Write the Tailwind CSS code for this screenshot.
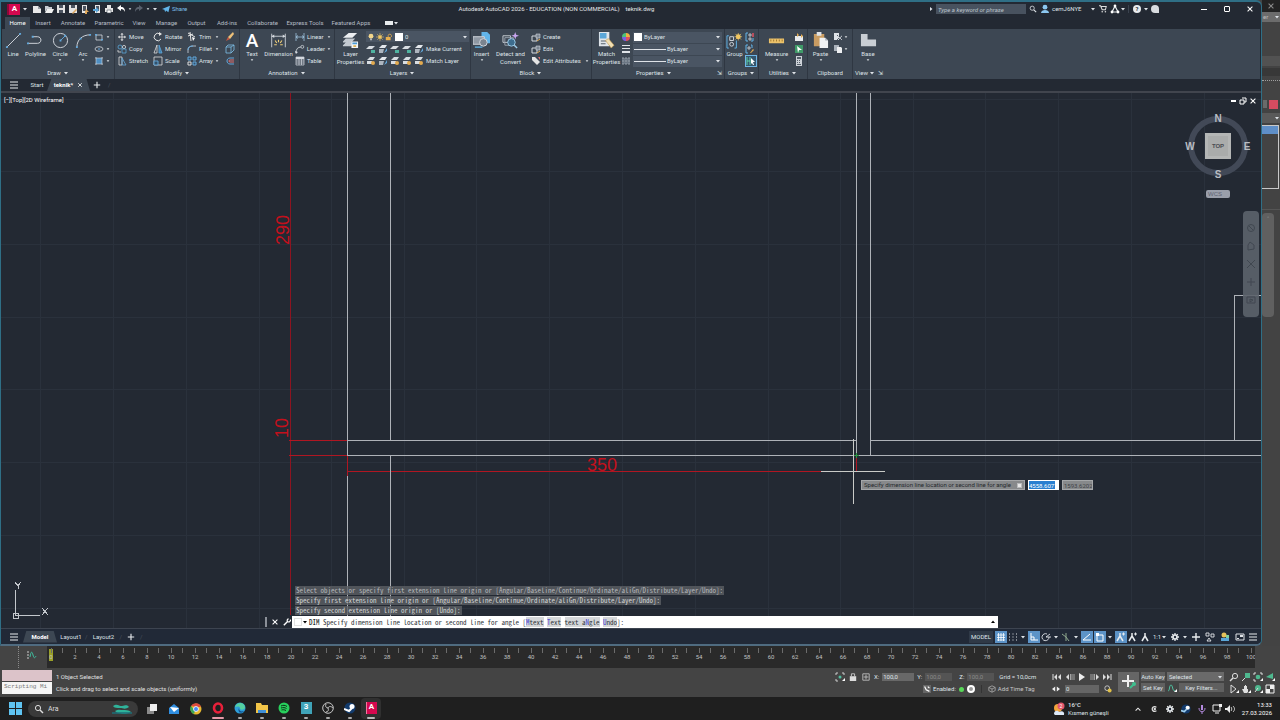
<!DOCTYPE html>
<html lang="en">

<head>
  <meta charset="UTF-8" />
  <meta name="viewport" content="width=device-width, initial-scale=1.0" />
  <title>Autodesk AutoCAD 2026 - teknik.dwg</title>
  <script src="https://cdn.jsdelivr.net/npm/@tailwindcss/browser@4"></script>
</head>

<body class="flex flex-col h-screen overflow-hidden bg-[#444444] font-[Roboto,sans-serif] text-[6px] leading-[8px] text-[#dfe3e8]">

  <!-- Icon sprite -->
  <svg class="hidden">
    <symbol id="caret" viewBox="0 0 6 6"><path d="M1 2h4L3 4.500z" fill="#dfe3e8" /></symbol>
    <symbol id="new" viewBox="0 0 10 10"><path d="M1 2h5l3 3v4H1z" fill="#e8e8e8" /><path d="M6 2v3h3" fill="#9aa0a8" /></symbol>
    <symbol id="open" viewBox="0 0 10 10"><path d="M1 2h3l1 1h3v2H3L1 8z" fill="#c8ccd2" /><path d="M3 5h7L8 9H1z" fill="#f0f0f0" /></symbol>
    <symbol id="save" viewBox="0 0 10 10"><path d="M1 1h8v8H1z" fill="#e4e4e4" /><path d="M3 1h4v3H3zM3 6h4v3H3z" fill="#4c5460" /></symbol>
    <symbol id="saveas" viewBox="0 0 10 10"><path d="M1 1h8v8H1z" fill="#e4e4e4" /><path d="M3 1h4v3H3z" fill="#4c5460" /><path d="M4 9l4-4 1 1-4 4z" fill="#d9a45c" /></symbol>
    <symbol id="cloud" viewBox="0 0 10 10"><path d="M2 1h5v8H2z" fill="#e4e4e4" /><path d="M3 2h3v5H3z" fill="#4c5460" /><path d="M6 5l3 3H7v2H5V8z" fill="#e0a85a" /></symbol>
    <symbol id="cloud2" viewBox="0 0 10 10"><path d="M3 1h5v8H3z" fill="#e4e4e4" /><path d="M4 2h3v5H4z" fill="#4c5460" /><path d="M1 5h3V3l3 3-3 3V7H1z" fill="#5aa6d8" /></symbol>
    <symbol id="print" viewBox="0 0 10 10"><path d="M3 1h4v3H3zM1 4h8v4H1z" fill="#e4e4e4" /><path d="M3 6h4v3H3z" fill="#fff" stroke="#4c5460" stroke-width=".6" /></symbol>
    <symbol id="undo" viewBox="0 0 10 10"><path d="M1 4l4-3v2c3 0 4 2 4 5-1-2-2-3-4-3v2z" fill="currentColor" /></symbol>
    <symbol id="plane" viewBox="0 0 10 10"><path d="M0 5l10-4-2 8-3-2-1 2-1-3z" fill="#62b5ea" /></symbol>
    <symbol id="mag" viewBox="0 0 10 10"><circle cx="4" cy="4" r="2.600" fill="none" stroke="currentColor" /><path d="M6 6l3 3" stroke="currentColor" stroke-width="1.400" /></symbol>
    <symbol id="user" viewBox="0 0 10 10"><circle cx="5" cy="3.200" r="2.400" fill="#8cc7f0" /><path d="M1 9c0-4 8-4 8 0z" fill="#8cc7f0" /></symbol>
    <symbol id="line" viewBox="0 0 18 18"><path d="M2 16L16 2" stroke="#d4d9df" /><path d="M1 15h2v2H1zM15 1h2v2h-2z" fill="#62a8dc" /></symbol>
    <symbol id="pline" viewBox="0 0 18 18"><path d="M1 12h10c5 0 5-7 0-7H6" stroke="#d4d9df" fill="none" /><path d="M0 11h2v2H0zM5 4h2v2H5z" fill="#62a8dc" /></symbol>
    <symbol id="circle" viewBox="0 0 18 18"><circle cx="9" cy="9" r="7.500" stroke="#d4d9df" fill="none" /><path d="M9 9l5-5" stroke="#62a8dc" /><path d="M8 8h2v2H8zM13 3h2v2h-2z" fill="#62a8dc" /></symbol>
    <symbol id="arc" viewBox="0 0 18 18"><path d="M2 16C2 8 8 3 16 3" stroke="#d4d9df" fill="none" /><path d="M1 15h2v2H1zM15 2h2v2h-2zM5 6h2v2H5z" fill="#62a8dc" /></symbol>
    <symbol id="rect" viewBox="0 0 10 10"><path d="M2 3h6v5H2z" stroke="#d4d9df" fill="none" stroke-width=".8" /><path d="M1 2h2v1.500H1zM7 7h2v1.500H7z" fill="#62a8dc" /></symbol>
    <symbol id="ell" viewBox="0 0 10 10"><ellipse cx="5" cy="5" rx="4" ry="2.300" stroke="#d4d9df" fill="none" stroke-width=".8" /><path d="M4.300 4.300h1.400v1.400H4.300z" fill="#62a8dc" /></symbol>
    <symbol id="hatch" viewBox="0 0 10 10"><path d="M2 2h6v6H2z" fill="#4f8fc2" /><path d="M1 2h8M1 8h8M2 1v8M8 1v8" stroke="#d4d9df" stroke-width=".6" /></symbol>
    <symbol id="move" viewBox="0 0 10 10"><path d="M5 1v8M1 5h8" stroke="#eee" /><path d="M5 0l2 2H3zM5 10l2-2H3zM0 5l2-2v4zM10 5L8 3v4z" fill="#eee" /></symbol>
    <symbol id="rot" viewBox="0 0 10 10"><path d="M8 7a3.700 3.700 0 1 1-1-5" stroke="#e4e4e4" fill="none" /><path d="M6 0l3 2-3 2z" fill="#e4e4e4" /></symbol>
    <symbol id="copy" viewBox="0 0 10 10"><circle cx="3" cy="3" r="2" stroke="#5aa6d8" fill="none" stroke-width=".8" /><circle cx="7" cy="3" r="1.600" stroke="#ddd" fill="none" stroke-width=".8" /><path d="M5 5h4v4H5z" stroke="#5aa6d8" fill="none" stroke-width=".8" /><path d="M1 6v2h3" stroke="#ddd" fill="none" stroke-width=".8" /></symbol>
    <symbol id="mirror" viewBox="0 0 10 10"><path d="M4 1v8H1z" stroke="#ddd" fill="none" stroke-width=".8" /><path d="M6 1v8h3z" fill="#3d7fae" stroke="#62a8dc" stroke-width=".8" /></symbol>
    <symbol id="stretch" viewBox="0 0 10 10"><path d="M2 1v8h3V1z" stroke="#ddd" fill="none" stroke-width=".8" /><path d="M5 2l4 7H5z" stroke="#62a8dc" fill="none" stroke-width=".8" /></symbol>
    <symbol id="scale" viewBox="0 0 10 10"><path d="M1 1h8v8H1z" stroke="#ddd" fill="none" stroke-width=".8" /><path d="M1 5h4v4H1z" stroke="#62a8dc" fill="#34516a" stroke-width=".9" /></symbol>
    <symbol id="trim" viewBox="0 0 10 10"><path d="M1 1l7 4M3 0l1 9M1 4l5-2" stroke="#e4e4e4" /><path d="M5 5l3 1-2 3z" fill="#fff" /></symbol>
    <symbol id="fillet" viewBox="0 0 10 10"><path d="M1 9V6c0-3 2-4 5-4h3" stroke="#d4d9df" fill="none" stroke-width=".8" /><path d="M1 6c0-3 2-4 5-4" stroke="#62a8dc" fill="none" /></symbol>
    <symbol id="array" viewBox="0 0 10 10"><path d="M1 1h3v3H1zM6 1h3v3H6zM6 6h3v3H6z" stroke="#62a8dc" fill="#34516a" /><path d="M1 6h3v3H1z" stroke="#ddd" fill="none" /></symbol>
    <symbol id="erase" viewBox="0 0 10 10"><path d="M1 9l2-4 2 2z" fill="#c9553f" /><path d="M3 5l5-5 1 2-4 5z" fill="#ecc079" /></symbol>
    <symbol id="explode" viewBox="0 0 10 10"><path d="M1 3h5v6H1zM1 3l2-2h6v5L6 9M6 3l3-2" stroke="#7fc0e8" fill="none" stroke-width=".8" /></symbol>
    <symbol id="offset" viewBox="0 0 10 10"><path d="M9 2H5c-4 0-4 6 0 6h4" stroke="#62a8dc" fill="none" /><path d="M9 4H5c-1.500 0-1.500 2 0 2h4" stroke="#e07070" fill="none" /></symbol>
    <symbol id="dim" viewBox="0 0 20 18"><path d="M2 1v16M18 1v16M2 4h16" stroke="#d4d9df" fill="none" /><path d="M2 4l3-2v4zM18 4l-3-2v4z" fill="#d4d9df" /><path d="M10 8v3M6 9l2 3M14 9l-2 3M5 14h3M12 14h3" stroke="#f0cf7a" stroke-width="1.300" /></symbol>
    <symbol id="linear" viewBox="0 0 10 10"><path d="M1 1v8M9 1v8M1 5h8M1 5l2-1.500M1 5l2 1.500M9 5L7 3.500M9 5L7 6.500" stroke="#9fc3dd" fill="none" stroke-width=".8" /></symbol>
    <symbol id="leader" viewBox="0 0 10 10"><path d="M1 9c0-4 2-6 5-6" stroke="#d4d9df" fill="none" stroke-width=".9" /><path d="M0 7l1 3 2-2z" fill="#d4d9df" /><circle cx="7.500" cy="2.800" r="1.500" stroke="#d4d9df" fill="none" stroke-width=".8" /></symbol>
    <symbol id="table" viewBox="0 0 10 10"><path d="M1 1h8v2H1z" fill="#d4d9df" /><path d="M1 1h8v8H1zM1 3h8M1 5h8M1 7h8M4 3v6M6.500 3v6" stroke="#d4d9df" fill="none" stroke-width=".7" /></symbol>
    <symbol id="layers" viewBox="0 0 18 18"><path d="M1 6l6-5h9l-5 5z" fill="#eceff2" /><path d="M1 10l3-3h10l-4 4H1zM1 14l3-3h9l-3 4H1z" fill="#c3c9d0" /><path d="M10 10h7v7h-7z" fill="#f3f6f9" /><path d="M11 11h5v2h-5z" fill="#4a9ad4" /><path d="M12 14h3v2h-3z" fill="#e0b24e" /></symbol>
    <symbol id="bulb" viewBox="0 0 10 10"><circle cx="5" cy="4" r="3" fill="#f3d58a" /><path d="M4 7h2v2H4z" fill="#d0d0d0" /></symbol>
    <symbol id="sun" viewBox="0 0 10 10"><circle cx="5" cy="5" r="2.300" fill="#f0c763" /><path d="M5 0v10M0 5h10M1.500 1.500l7 7M8.500 1.500l-7 7" stroke="#f0c763" stroke-width=".7" /></symbol>
    <symbol id="lock" viewBox="0 0 10 10"><path d="M1 5h6v4H1z" fill="#e8b04e" /><path d="M4 5V3c0-2 4-2 4 0v2" stroke="#e8b04e" fill="none" /></symbol>
    <symbol id="la" viewBox="0 0 10 10"><path d="M0 5l3-3h6L6 5z" fill="#d8dde2" /><path d="M5 6h4v3H5z" fill="#4fb3a0" /></symbol>
    <symbol id="lb" viewBox="0 0 10 10"><path d="M1 4l3-3h5L7 4z" fill="#e4e8ec" /><path d="M1 5h5l-1 4H1z" fill="#aeb6bf" /><path d="M9 4v3L6 9z" fill="#62a8dc" /></symbol>
    <symbol id="lc" viewBox="0 0 10 10"><path d="M1 4l3-3h5L7 4zM1 5h5v3H1z" fill="#d8dde2" /><circle cx="7" cy="7" r="2" fill="#e3ab50" /></symbol>
    <symbol id="insert" viewBox="0 0 18 18"><path d="M9 0h6l3 3v9H9z" fill="#62b5ea" /><path d="M0 5h12v8H0z" fill="#8f98a3" stroke="#d4d9df" /><circle cx="11" cy="11" r="4" fill="#7b848f" stroke="#d4d9df" /><path d="M2 16h8" stroke="#62b5ea" stroke-width="1.500" /></symbol>
    <symbol id="detect" viewBox="0 0 18 18"><path d="M1 4h8v7H1z" stroke="#c9ced4" fill="none" /><path d="M3 6h9v8H3z" stroke="#9aa3ad" fill="none" /><circle cx="10" cy="11" r="4" fill="#3e6d8e" stroke="#9fcdea" /><path d="M13 14l3 3" stroke="#9fcdea" stroke-width="1.500" /><path d="M14 0l1 3 3 1-3 1-1 3-1-3-3-1 3-1z" fill="#c9a6f0" /></symbol>
    <symbol id="block" viewBox="0 0 10 10"><path d="M1 4h5v5H1z" stroke="#d4d9df" fill="none" /><path d="M5 2h4v4H5z" fill="#7c8793" stroke="#d4d9df" stroke-width=".6" /><path d="M6 9l3-2" stroke="#e3ab50" /></symbol>
    <symbol id="tag" viewBox="0 0 10 10"><path d="M1 1h3l5 5-3 3-5-5z" fill="#e4e4e4" /><path d="M7 1h2v3z" fill="#e07070" /></symbol>
    <symbol id="match" viewBox="0 0 18 18"><path d="M1 0h11v15H1z" fill="#dfe4e9" /><path d="M2 1h7v6H2z" fill="#5aa6d8" /><path d="M3 9h6v1H3zM3 12h5v1H3z" fill="#56606b" /><path d="M8 9l3-2 6 7-3 3z" fill="#f0dfb4" stroke="#c49a4a" stroke-width=".6" /></symbol>
    <symbol id="wheel" viewBox="0 0 10 10"><path d="M5 5V1a4 4 0 0 1 4 4z" fill="#f0b040" /><path d="M5 5h4a4 4 0 0 1-4 4z" fill="#e04f5f" /><path d="M5 5v4a4 4 0 0 1-4-4z" fill="#7a62e0" /><path d="M5 5H1a4 4 0 0 1 4-4z" fill="#4cc27a" /></symbol>
    <symbol id="lw" viewBox="0 0 10 10"><path d="M1 1.500h8M1 4.500h8" stroke="#dfe3e8" /><path d="M1 8h8" stroke="#dfe3e8" stroke-width="2" /></symbol>
    <symbol id="lt" viewBox="0 0 10 10"><path d="M1 2h8v6H1z" fill="#6b7683" /><path d="M1 2h8M1 5h8M1 8h8" stroke="#98a0aa" stroke-dasharray="2 1" /></symbol>
    <symbol id="group" viewBox="0 0 18 18"><path d="M3 4H1v13h2M11 9v8H9" stroke="#62b5ea" fill="none" /><path d="M4 5h4v4H4z" stroke="#d4d9df" fill="none" /><circle cx="6" cy="13" r="2" stroke="#d4d9df" fill="none" /><circle cx="13" cy="5" r="2.600" fill="#f0c763" /><path d="M13 1v8M9 5h8M10 2l6 6M16 2l-6 6" stroke="#f0c763" stroke-width=".7" /></symbol>
    <symbol id="grp" viewBox="0 0 10 10"><path d="M3 1H1v8h2M6 9h2V6" stroke="#62b5ea" fill="none" /><path d="M4 2h2v2H4zM4 6h2v2H4z" stroke="#d4d9df" fill="none" stroke-width=".8" /><path d="M8 1v4" stroke="#e05060" stroke-width="1.500" /></symbol>
    <symbol id="grpedit" viewBox="0 0 10 10"><path d="M3 1H1v8h2M6 1h1v3" stroke="#62b5ea" fill="none" /><path d="M3 3h2v2H3z" stroke="#d4d9df" fill="none" stroke-width=".8" /><path d="M5 9l3-4 1 1-3 3z" fill="#e3ab50" /></symbol>
    <symbol id="grpsel" viewBox="0 0 10 10"><path d="M1 1v8M4 1v8M1 5h3" stroke="#5fd0a8" /><path d="M5 2l4 4-2 0 1 3-1 0-1-2-1 1z" fill="#fff" /></symbol>
    <symbol id="measure" viewBox="0 0 18 18"><path d="M1 7h16v5H1z" fill="#ecc26a" /><path d="M3 8v2M6 8v2M9 8v2M12 8v2M15 8v2" stroke="#8a6420" stroke-width=".8" /></symbol>
    <symbol id="qsel" viewBox="0 0 10 10"><path d="M1 4h8v5H1z" fill="#e8ebee" /><path d="M3 1l2 2-2 2zM7 2v4l2-2z" fill="#e3ab50" /></symbol>
    <symbol id="selall" viewBox="0 0 10 10"><path d="M1 1h8v8H1z" fill="#3f9a68" /><path d="M3 2l5 4-3 0-1 3z" fill="#fff" /></symbol>
    <symbol id="calc" viewBox="0 0 10 10"><path d="M2 0h6v10H2z" fill="#cdd2d8" /><path d="M3 1h4v2H3zM3 4h1v1H3zM5 4h1v1H5zM3 6h1v1H3zM5 6h1v1H5zM3 8h4v1H3z" fill="#56606b" /></symbol>
    <symbol id="paste" viewBox="0 0 18 18"><path d="M2 2h11v13H2z" fill="#c99c62" /><path d="M5 0h5v4H5z" fill="#dfe3e8" /><path d="M8 6h6l3 3v8H8z" fill="#f0f2f4" /><path d="M14 6v3h3" fill="#a8afb8" /></symbol>
    <symbol id="cut" viewBox="0 0 10 10"><path d="M1 1h5v7H1z" fill="#dfe3e8" /><path d="M4 3l5 5M9 3L4 8" stroke="#56606b" /><path d="M5 4l4 4M9 4L5 8" stroke="#dfe3e8" stroke-width=".7" /></symbol>
    <symbol id="cpy" viewBox="0 0 10 10"><path d="M1 1h5v6H1z" fill="#aab2bb" /><path d="M4 3h4l1 1v5H4z" fill="#eef0f2" /></symbol>
    <symbol id="base" viewBox="0 0 18 18"><path d="M1 2h7v6h9v7H1z" fill="#c9ced4" /></symbol>
    <symbol id="bars" viewBox="0 0 10 10"><path d="M1 2h8M1 5h8M1 8h8" stroke="#e8ebee" stroke-width="1.200" /></symbol>
    <symbol id="plus" viewBox="0 0 10 10"><path d="M5 1v8M1 5h8" stroke="#e8ebee" stroke-width="1.400" /></symbol>
    <symbol id="x" viewBox="0 0 10 10"><path d="M2 2l6 6M8 2L2 8" stroke="currentColor" stroke-width="1.300" /></symbol>
    <symbol id="man" viewBox="0 0 10 10"><path d="M5 1v4M5 4L2 9M5 4l3 5" stroke="#e8ebee" stroke-width="1.500" /></symbol>
    <symbol id="manplus" viewBox="0 0 10 10"><path d="M4 1v4M4 4L1 9M4 4l3 5" stroke="#e8ebee" stroke-width="1.500" /><path d="M6 2h3M7.500 0.500v3" stroke="#e8ebee" /></symbol>
    <symbol id="gear" viewBox="0 0 10 10"><path d="M5 0v10M0 5h10M1.500 1.500l7 7M8.500 1.500l-7 7" stroke="#e8ebee" stroke-width="1.600" /><circle cx="5" cy="5" r="3.300" fill="#e8ebee" /><circle cx="5" cy="5" r="1.500" fill="#232c3b" /></symbol>
    <symbol id="end" viewBox="0 0 10 10"><path d="M1 2v6" stroke="#ddd" /><path d="M5 2v6L2 5zM9 2v6L6 5z" fill="#ddd" /></symbol>
    <symbol id="step" viewBox="0 0 10 10"><path d="M4 2v6L1 5z" fill="#ddd" /><path d="M5.500 2v6M7 2v6M9 2v6" stroke="#bbb" stroke-width=".8" /></symbol>
  </svg>

  <div class="flex flex-1 min-h-0">

    <!-- AutoCAD window -->
    <div class="flex flex-1 flex-col min-w-0 border border-t-2 border-b-2 border-[#2f6f86] border-b-[#4f6b80] rounded-br-md rounded-tr-md bg-[#232933] overflow-hidden">

      <!-- Title bar -->
      <header class="flex h-[14px] shrink-0 items-center">
        <div class="flex w-[36%] items-center pl-1.5 gap-0.5">
          <button class="w-[13px] h-[11px] bg-[#d5084f] border-l-2 border-[#8d0837] text-white font-bold text-[8px] leading-[10px]">A</button>
          <svg class="size-1.5 mr-0.5"><use href="#caret" /></svg>
          <button aria-label="New"><svg class="size-2.5"><use href="#new" /></svg></button>
          <button aria-label="Open"><svg class="size-2.5"><use href="#open" /></svg></button>
          <button aria-label="Save"><svg class="size-2.5"><use href="#save" /></svg></button>
          <button aria-label="Save As"><svg class="size-2.5"><use href="#saveas" /></svg></button>
          <button aria-label="Open from web"><svg class="size-2.5"><use href="#cloud" /></svg></button>
          <button aria-label="Save to web"><svg class="size-2.5"><use href="#cloud2" /></svg></button>
          <button aria-label="Plot"><svg class="size-2.5"><use href="#print" /></svg></button>
          <button aria-label="Undo" class="text-white"><svg class="size-2.5"><use href="#undo" /></svg></button>
          <svg class="size-1"><use href="#caret" /></svg>
          <button aria-label="Redo" class="text-[#59616d] -scale-x-100"><svg class="size-2.5"><use href="#undo" /></svg></button>
          <svg class="size-1"><use href="#caret" /></svg>
          <svg class="size-1.5"><use href="#caret" /></svg>
          <button class="flex items-center gap-0.5 ml-0.5 text-[#7cc0ec]"><svg class="size-2"><use href="#plane" /></svg>Share</button>
        </div>
        <h1 class="pl-1 whitespace-pre text-[#e4e7ea]">Autodesk AutoCAD 2026 - EDUCATION (NON COMMERCIAL)    teknik.dwg</h1>
        <div class="ml-auto flex items-center">
          <svg class="size-1.5 -rotate-90"><use href="#caret" /></svg>
          <input type="text" aria-label="Search" placeholder="Type a keyword or phrase" class="w-[90px] h-[10px] bg-[#48525f] px-0.5 ml-0.5 italic placeholder:text-[#bcc3cb]" />
          <button aria-label="Find" class="w-3.5 flex justify-center"><svg class="size-2"><use href="#mag" /></svg></button>
          <button class="flex items-center w-[50px] gap-0.5"><svg class="size-2.5"><use href="#user" /></svg>cemJ6NYE</button>
          <svg class="size-1.5"><use href="#caret" /></svg>
          <button aria-label="App store" class="w-3.5 flex justify-center"><svg class="size-2" viewBox="0 0 10 10"><path d="M0 1h2l2 5h4l1-4H3" stroke="#ddd" fill="none" stroke-width="1.300" /><circle cx="4" cy="8.500" r="1" fill="#ddd" /><circle cx="8" cy="8.500" r="1" fill="#ddd" /></svg></button>
          <button aria-label="Autodesk" class="w-2.5"><svg class="size-2.5" viewBox="0 0 10 10"><path d="M5 2L2 8M5 2l3 6M2 8h6" stroke="#e8ebee" fill="none" stroke-width="1.200" /><circle cx="5" cy="2" r="1.400" fill="#fff" /><circle cx="2" cy="8" r="1.400" fill="#fff" /><circle cx="8" cy="8" r="1.400" fill="#fff" /></svg></button>
          <svg class="size-1.5"><use href="#caret" /></svg>
          <span class="h-2 w-px bg-[#3b434f] mx-0.5"></span>
          <button aria-label="Help" class="ml-0.5 size-2 rounded-full bg-[#e8ebee] text-[#232933] font-bold leading-[8px]">?</button>
          <svg class="size-1.5 mx-0.5"><use href="#caret" /></svg>
          <button aria-label="Feedback" class="h-2 w-2 rounded-t-full rounded-bl-full bg-[#d8dce0]"></button>
          <button aria-label="Minimize" class="ml-[38px] flex w-[14px] justify-center"><span class="h-px w-1.5 bg-white"></span></button>
          <button aria-label="Maximize" class="flex w-8 justify-center"><span class="size-1.5 rounded-[1px] border border-white"></span></button>
          <button aria-label="Close" class="mr-1 text-white w-3.5 flex justify-center"><svg class="size-2"><use href="#x" /></svg></button>
        </div>
      </header>

      <!-- Ribbon tabs -->
      <nav class="flex h-3 shrink-0 items-stretch mt-px pl-1 text-[#b6bdc6] leading-[12px]">
        <a href="#" class="w-[25px] text-center bg-[#3d4753] text-white">Home</a>
        <a href="#" class="w-[26px] text-center">Insert</a>
        <a href="#" class="w-[34px] text-center">Annotate</a>
        <a href="#" class="w-[38px] text-center">Parametric</a>
        <a href="#" class="w-[22px] text-center">View</a>
        <a href="#" class="w-[33px] text-center">Manage</a>
        <a href="#" class="w-[27px] text-center">Output</a>
        <a href="#" class="w-[34px] text-center">Add-ins</a>
        <a href="#" class="w-[37px] text-center">Collaborate</a>
        <a href="#" class="w-[48px] text-center">Express Tools</a>
        <a href="#" class="w-[44px] text-center">Featured Apps</a>
        <button aria-label="Ribbon display" class="flex items-center ml-3"><span class="w-2 h-1 bg-[#e8ebee]"></span><svg class="size-1.5"><use href="#caret" /></svg></button>
      </nav>

      <!-- Ribbon -->
      <div class="flex h-[50px] shrink-0 bg-[#3d4753] mx-px">

        <!-- Draw -->
        <section class="flex flex-col w-[113px] shrink-0 border-r border-[#2f3742] pt-0.5">
          <div class="flex h-9">
            <button class="flex flex-col items-center w-[22px]"><svg class="size-[19px] p-px"><use href="#line" /></svg>Line</button>
            <button class="flex flex-col items-center w-[23px]"><svg class="size-[19px] p-px"><use href="#pline" /></svg>Polyline</button>
            <button class="flex flex-col items-center w-[26px]"><svg class="size-[19px] p-px"><use href="#circle" /></svg>Circle<svg class="size-1"><use href="#caret" /></svg></button>
            <button class="flex flex-col items-center w-[20px]"><svg class="size-[19px] p-px"><use href="#arc" /></svg>Arc<svg class="size-1"><use href="#caret" /></svg></button>
            <div class="flex flex-col w-[20px] pl-px">
              <button aria-label="Rectangle" class="flex h-3 items-center gap-0.5"><svg class="size-2.5"><use href="#rect" /></svg><svg class="size-1"><use href="#caret" /></svg></button>
              <button aria-label="Ellipse" class="flex h-3 items-center gap-0.5"><svg class="size-2.5"><use href="#ell" /></svg><svg class="size-1"><use href="#caret" /></svg></button>
              <button aria-label="Hatch" class="flex h-3 items-center gap-0.5"><svg class="size-2.5"><use href="#hatch" /></svg><svg class="size-1"><use href="#caret" /></svg></button>
            </div>
          </div>
          <h2 class="flex h-[11px] items-center justify-center gap-0.5">Draw<svg class="size-1.5"><use href="#caret" /></svg></h2>
        </section>

        <!-- Modify -->
        <section class="flex flex-col w-[125px] shrink-0 border-r border-[#2f3742] pt-0.5">
          <div class="flex h-9 pl-0.5">
            <div class="w-[36px]">
              <button class="flex h-3 items-center gap-0.5"><svg class="size-2.5 p-px"><use href="#move" /></svg>Move</button>
              <button class="flex h-3 items-center gap-0.5"><svg class="size-2.5"><use href="#copy" /></svg>Copy</button>
              <button class="flex h-3 items-center gap-0.5"><svg class="size-2.5"><use href="#stretch" /></svg>Stretch</button>
            </div>
            <div class="w-[34px]">
              <button class="flex h-3 items-center gap-0.5"><svg class="size-2.5"><use href="#rot" /></svg>Rotate</button>
              <button class="flex h-3 items-center gap-0.5"><svg class="size-2.5"><use href="#mirror" /></svg>Mirror</button>
              <button class="flex h-3 items-center gap-0.5"><svg class="size-2.5"><use href="#scale" /></svg>Scale</button>
            </div>
            <div class="w-[38px]">
              <button class="flex h-3 w-8 items-center gap-0.5"><svg class="size-2.5"><use href="#trim" /></svg>Trim<svg class="size-1 ml-auto"><use href="#caret" /></svg></button>
              <button class="flex h-3 w-8 items-center gap-0.5"><svg class="size-2.5"><use href="#fillet" /></svg>Fillet<svg class="size-1 ml-auto"><use href="#caret" /></svg></button>
              <button class="flex h-3 w-8 items-center gap-0.5"><svg class="size-2.5"><use href="#array" /></svg>Array<svg class="size-1 ml-auto"><use href="#caret" /></svg></button>
            </div>
            <div>
              <button aria-label="Erase" class="flex h-3 items-center"><svg class="size-2.5"><use href="#erase" /></svg></button>
              <button aria-label="Explode" class="flex h-3 items-center"><svg class="size-2.5"><use href="#explode" /></svg></button>
              <button aria-label="Offset" class="flex h-3 items-center"><svg class="size-2.5"><use href="#offset" /></svg></button>
            </div>
          </div>
          <h2 class="flex h-[11px] items-center justify-center gap-0.5">Modify<svg class="size-1.5"><use href="#caret" /></svg></h2>
        </section>

        <!-- Annotation -->
        <section class="flex flex-col w-[95px] shrink-0 border-r border-[#2f3742] pt-0.5">
          <div class="flex h-9">
            <button class="flex flex-col items-center w-6"><span class="h-[19px] text-[19px] leading-[19px] font-medium text-white">A</span>Text<svg class="size-1"><use href="#caret" /></svg></button>
            <button class="flex flex-col items-center w-[29px]"><svg class="size-[19px] p-px"><use href="#dim" /></svg>Dimension</button>
            <div class="pl-0.5">
              <button class="flex h-3 w-9 items-center gap-0.5"><svg class="size-2.5"><use href="#linear" /></svg>Linear<svg class="size-1 ml-auto"><use href="#caret" /></svg></button>
              <button class="flex h-3 w-9 items-center gap-0.5"><svg class="size-2.5"><use href="#leader" /></svg>Leader<svg class="size-1 ml-auto"><use href="#caret" /></svg></button>
              <button class="flex h-3 items-center gap-0.5"><svg class="size-2.5"><use href="#table" /></svg>Table</button>
            </div>
          </div>
          <h2 class="flex h-[11px] items-center justify-center gap-0.5">Annotation<svg class="size-1.5"><use href="#caret" /></svg></h2>
        </section>

        <!-- Layers -->
        <section class="flex flex-col w-[136px] shrink-0 border-r border-[#2f3742] pt-0.5">
          <div class="flex h-9">
            <button class="flex flex-col items-center w-[31px]"><svg class="size-[19px] p-px"><use href="#layers" /></svg>Layer<br />Properties</button>
            <div class="flex-1">
              <div class="flex h-[11px] mr-px mb-px items-center bg-[#4a5563] gap-px px-px">
                <svg class="size-2"><use href="#bulb" /></svg><svg class="size-2"><use href="#sun" /></svg><svg class="size-2"><use href="#lock" /></svg><span class="size-2 mx-px bg-white"></span>
                <select aria-label="Layer" class="flex-1 appearance-none h-[10px]"><option>0</option></select>
                <svg class="size-1.5"><use href="#caret" /></svg>
              </div>
              <div class="flex h-3 items-center gap-0.5">
                <svg class="size-2.5"><use href="#la" /></svg><svg class="size-2.5"><use href="#lb" /></svg><svg class="size-2.5"><use href="#la" /></svg><svg class="size-2.5"><use href="#la" /></svg>
                <button class="flex items-center gap-0.5"><svg class="size-2.5"><use href="#lb" /></svg>Make Current</button>
              </div>
              <div class="flex h-3 items-center gap-0.5">
                <svg class="size-2.5"><use href="#lc" /></svg><svg class="size-2.5"><use href="#lb" /></svg><svg class="size-2.5"><use href="#lc" /></svg><svg class="size-2.5"><use href="#lc" /></svg>
                <button class="flex items-center gap-0.5"><svg class="size-2.5"><use href="#lc" /></svg>Match Layer</button>
              </div>
            </div>
          </div>
          <h2 class="flex h-[11px] items-center justify-center gap-0.5">Layers<svg class="size-1.5"><use href="#caret" /></svg></h2>
        </section>

        <!-- Block -->
        <section class="flex flex-col w-[121px] shrink-0 border-r border-[#2f3742] pt-0.5">
          <div class="flex h-9">
            <button class="flex flex-col items-center w-[21px]"><svg class="size-[19px] p-px"><use href="#insert" /></svg>Insert<svg class="size-1"><use href="#caret" /></svg></button>
            <button class="flex flex-col items-center w-[37px] whitespace-nowrap"><svg class="size-[19px] p-px"><use href="#detect" /></svg>Detect and<br />Convert</button>
            <div class="pl-0.5">
              <button class="flex h-3 items-center gap-0.5"><svg class="size-2.5"><use href="#block" /></svg>Create</button>
              <button class="flex h-3 items-center gap-0.5"><svg class="size-2.5"><use href="#block" /></svg>Edit</button>
              <button class="flex h-3 items-center gap-0.5"><svg class="size-2.5"><use href="#tag" /></svg>Edit Attributes<svg class="size-1 ml-0.5"><use href="#caret" /></svg></button>
            </div>
          </div>
          <h2 class="flex h-[11px] items-center justify-center gap-0.5">Block<svg class="size-1.5"><use href="#caret" /></svg></h2>
        </section>

        <!-- Properties -->
        <section class="flex flex-col w-[133px] shrink-0 border-r border-[#2f3742] pt-0.5">
          <div class="flex h-9">
            <button class="flex flex-col items-center w-[29px]"><svg class="size-[19px] p-px"><use href="#match" /></svg>Match<br />Properties</button>
            <div class="flex-1 pr-0.5">
              <div class="flex h-3 items-center gap-0.5">
                <svg class="size-2.5"><use href="#wheel" /></svg>
                <div class="flex flex-1 h-[11px] items-center bg-[#4a5563] px-px gap-0.5"><span class="size-2 bg-white"></span><select aria-label="Object color" class="flex-1 appearance-none h-[10px]"><option>ByLayer</option></select><svg class="size-1.5"><use href="#caret" /></svg></div>
              </div>
              <div class="flex h-3 items-center gap-0.5">
                <svg class="size-2.5"><use href="#lw" /></svg>
                <div class="flex flex-1 h-[11px] items-center bg-[#4a5563] px-px gap-px"><span class="h-px w-8 bg-[#dfe3e8]"></span><select aria-label="Lineweight" class="flex-1 appearance-none h-[10px]"><option>ByLayer</option></select><svg class="size-1.5"><use href="#caret" /></svg></div>
              </div>
              <div class="flex h-3 items-center gap-0.5">
                <svg class="size-2.5"><use href="#lt" /></svg>
                <div class="flex flex-1 h-[11px] items-center bg-[#4a5563] px-px gap-px"><span class="h-px w-8 bg-[#dfe3e8]"></span><select aria-label="Linetype" class="flex-1 appearance-none h-[10px]"><option>ByLayer</option></select><svg class="size-1.5"><use href="#caret" /></svg></div>
              </div>
            </div>
          </div>
          <h2 class="flex h-[11px] items-center pl-[44px] gap-0.5">Properties<svg class="size-1.5"><use href="#caret" /></svg><span class="ml-auto pr-0.5">&#8690;</span></h2>
        </section>

        <!-- Groups -->
        <section class="flex flex-col w-[34px] shrink-0 border-r border-[#2f3742] pt-0.5">
          <div class="flex h-9">
            <button class="flex flex-col items-center w-[19px]"><svg class="size-[19px] p-px"><use href="#group" /></svg>Group</button>
            <div class="pl-px">
              <button aria-label="Ungroup" class="flex h-3 items-center"><svg class="size-2.5"><use href="#grp" /></svg></button>
              <button aria-label="Group edit" class="flex h-3 items-center"><svg class="size-2.5"><use href="#grpedit" /></svg></button>
              <button aria-label="Group selection" class="flex size-3 items-center justify-center border border-[#6fb6e6] bg-[#35566e]"><svg class="size-2.5"><use href="#grpsel" /></svg></button>
            </div>
          </div>
          <h2 class="flex h-[11px] items-center justify-center gap-0.5">Groups<svg class="size-1.5"><use href="#caret" /></svg></h2>
        </section>

        <!-- Utilities -->
        <section class="flex flex-col w-[49px] shrink-0 border-r border-[#2f3742] pt-0.5">
          <div class="flex h-9">
            <button class="flex flex-col items-center w-[35px]"><svg class="size-[19px] p-px"><use href="#measure" /></svg>Measure<svg class="size-1"><use href="#caret" /></svg></button>
            <div>
              <button aria-label="Quick select" class="flex h-3 items-center"><svg class="size-2.5"><use href="#qsel" /></svg></button>
              <button aria-label="Select all" class="flex h-3 items-center"><svg class="size-2.5"><use href="#selall" /></svg></button>
              <button aria-label="Calculator" class="flex h-3 items-center"><svg class="size-2.5"><use href="#calc" /></svg></button>
            </div>
          </div>
          <h2 class="flex h-[11px] items-center justify-center gap-0.5">Utilities<svg class="size-1.5"><use href="#caret" /></svg></h2>
        </section>

        <!-- Clipboard -->
        <section class="flex flex-col w-[45px] shrink-0 border-r border-[#2f3742] pt-0.5">
          <div class="flex h-9">
            <button class="flex flex-col items-center w-[25px]"><svg class="size-[19px] p-px"><use href="#paste" /></svg>Paste<svg class="size-1"><use href="#caret" /></svg></button>
            <div>
              <button aria-label="Cut" class="flex h-3 items-center gap-px"><svg class="size-2.5"><use href="#cut" /></svg><svg class="size-1"><use href="#caret" /></svg></button>
              <button aria-label="Copy clip" class="flex h-3 items-center gap-px"><svg class="size-2.5"><use href="#cpy" /></svg><svg class="size-1"><use href="#caret" /></svg></button>
            </div>
          </div>
          <h2 class="flex h-[11px] items-center justify-center">Clipboard</h2>
        </section>

        <!-- View -->
        <section class="flex flex-col w-[30px] shrink-0 pt-0.5">
          <div class="flex h-9">
            <button class="flex flex-col items-center w-full"><svg class="size-[19px] p-px"><use href="#base" /></svg>Base<svg class="size-1"><use href="#caret" /></svg></button>
          </div>
          <h2 class="flex h-[11px] items-center pl-0.5 gap-px">View<svg class="size-1.5"><use href="#caret" /></svg><span class="ml-auto">&#8690;</span></h2>
        </section>
      </div>

      <!-- File tabs -->
      <nav class="flex h-[14px] shrink-0 items-center border-b-2 border-[#41454e]">
        <button aria-label="File menu" class="w-[26px] flex justify-center"><svg class="size-2.5"><use href="#bars" /></svg></button>
        <a href="#" class="w-[20px] text-center">Start</a>
        <a href="#" class="flex w-[43px] h-full items-center justify-center gap-1 bg-[#3d4753] font-bold text-white [clip-path:polygon(10%_0,92%_0,100%_100%,0_100%)]">teknik*<svg class="size-1.5"><use href="#x" /></svg></a>
        <button aria-label="New tab" class="w-[14px] flex justify-center"><svg class="size-2"><use href="#plus" /></svg></button>
        <span class="text-[#4a525e] pl-1">/</span>
      </nav>

      <!-- Drawing area -->
      <main class="relative flex-1 min-h-0 overflow-hidden bg-[#232933]">
        <svg class="absolute left-0 top-0 w-[1260px] h-[536px]" viewBox="1 93 1260 536" shape-rendering="crispEdges">
          <path d="M40.500 93v536M113.500 93v536M186.500 93v536M259.500 93v536M331.500 93v536M404.500 93v536M476.500 93v536M549.500 93v536M622.500 93v536M695.500 93v536M768.500 93v536M840.500 93v536M913.500 93v536M985.500 93v536M1058.500 93v536M1131.500 93v536M1204.500 93v536M1 99.500h1260M1 171.500h1260M1 244.500h1260M1 317.500h1260M1 389.500h1260M1 462.500h1260M1 535.500h1260M1 608.500h1260" stroke="#2a313c" />
          <path d="M290.500 93v522" stroke="#8d1420" />
          <path d="M289 440.500h58M289 455.500h58M347 471.500h508M856.500 455v17" stroke="#b01622" />
          <path d="M347.500 93v523M390.500 93v347M390.500 455v161M347 440.500h509M347 455.500h914M870 440.500h391M856.500 93v362M870.500 93v362M1234.500 440V295.500H1261" stroke="#aeb2b8" fill="none" />
          <path d="M347.500 456v20" stroke="#b01622" />
          <path d="M853.500 439v65M821 471.500h64" stroke="#c9cbc8" />
          <path d="M854 455.500h5M856.500 453v5" stroke="#2e9a46" />
          <g fill="#c4101c" font-family="Liberation Sans, sans-serif" font-size="18" text-anchor="middle">
            <text x="602" y="471">350</text>
            <text transform="translate(289 230) rotate(-90)">290</text>
            <text transform="translate(288 428) rotate(-90)">10</text>
          </g>
          <!-- UCS icon -->
          <path d="M15.500 590v25.500H40M13 613h5v5h-5zM15 582l3 4 3-4M18 586v3M42 608l6 7M48 608l-6 7" stroke="#c3c7cc" fill="none" />
        </svg>

        <div class="absolute left-[3px] top-[3px] text-white">[−][Top][2D Wireframe]</div>

        <div class="absolute right-1 top-1 flex gap-0.5 text-white">
          <button aria-label="Minimize drawing" class="flex size-2 items-center justify-center"><span class="h-0.5 w-[5px] bg-white"></span></button>
          <button aria-label="Restore drawing" class="flex size-2 items-center justify-center"><svg class="size-2" viewBox="0 0 8 8"><path d="M3 1h4v4H5M1 3h4v4H1z" stroke="#fff" fill="none" /></svg></button>
          <button aria-label="Close drawing" class="size-2"><svg class="size-2"><use href="#x" /></svg></button>
        </div>

        <!-- View cube -->
        <svg class="absolute right-2 top-[17px] w-[70px] h-[90px]" viewBox="1183 110 70 90" font-family="Liberation Sans, sans-serif" font-weight="bold" text-anchor="middle">
          <circle cx="1218" cy="146" r="27" stroke="#424957" stroke-width="6" fill="none" />
          <path d="M1205 133h26v26h-26z" fill="#b4b6b5" />
          <path d="M1208 136h20v20h-20z" fill="#aaacab" />
          <text x="1218" y="148" font-size="6" fill="#4a4d52">TOP</text>
          <g font-size="10" fill="#b9bdc3">
            <text x="1218" y="122">N</text>
            <text x="1218" y="178">S</text>
            <text x="1190" y="150">W</text>
            <text x="1247" y="150">E</text>
          </g>
          <rect x="1206" y="190" width="24" height="8" rx="2" fill="#9a9fab" />
          <text x="1215" y="196" font-size="6" font-weight="normal" fill="#5e6472">WCS</text>
        </svg>

        <!-- Navigation bar -->
        <div class="absolute right-0.5 top-[118px] flex h-[106px] w-4 flex-col items-center justify-around rounded-sm bg-[#5c636c] py-2 text-[#444b54] opacity-90">
          <svg class="size-2.5" viewBox="0 0 10 10"><circle cx="5" cy="5" r="3.500" stroke="currentColor" fill="none" /><path d="M3 3l4 4" stroke="currentColor" /></svg>
          <svg class="size-2.5" viewBox="0 0 10 10"><path d="M2 9V4l2-3 4 3v4z" stroke="currentColor" fill="none" /></svg>
          <svg class="size-2.5" viewBox="0 0 10 10"><path d="M1 1l8 8M9 1L1 9" stroke="currentColor" /></svg>
          <svg class="size-2.5" viewBox="0 0 10 10"><path d="M1 5h8M5 1v8" stroke="currentColor" /></svg>
          <svg class="size-2.5" viewBox="0 0 10 10"><path d="M1 2h8v6H1zM4 4l3 1-3 2z" stroke="currentColor" fill="none" /></svg>
        </div>

        <!-- Dynamic input -->
        <div class="absolute left-[860px] top-[387px] flex h-[10px] items-center gap-[3px]">
          <label for="dyn" class="flex h-full w-[164px] items-center justify-between border border-[#a5a7a9] bg-[#87898b] px-0.5 text-[#25282c] whitespace-nowrap">Specify dimension line location or second line for angle<span class="size-[5px] border border-[#b8babc] bg-[#e8e8e8]"></span></label>
          <input id="dyn" type="text" value="4558.6077" class="h-full w-[31px] border border-r-4 border-white bg-[#2a7fd0] text-white" />
          <input aria-label="Y" type="text" value="1593.6202" class="h-full w-[31px] border border-[#a5a7a9] bg-[#87898b] pl-px text-[#3d4146]" />
        </div>

        <!-- Command line -->
        <div class="absolute bottom-0 left-[263px] w-[734px] font-['Noto_Sans_Mono_CJK_SC','Liberation_Mono',monospace] text-[7px]">
          <div class="flex flex-col items-start gap-px pl-[31px] leading-[9px] text-[#d2d4d6]">
            <p class="bg-[#5b5f64]/80 px-px text-[#b4b7ba]">Select objects or specify first extension line origin or [Angular/Baseline/Continue/Ordinate/aliGn/Distribute/Layer/Undo]:</p>
            <p class="bg-[#5b5f64]/80 px-px">Specify first extension line origin or [Angular/Baseline/Continue/Ordinate/aliGn/Distribute/Layer/Undo]:</p>
            <p class="bg-[#5b5f64]/80 px-px">Specify second extension line origin or [Undo]:</p>
          </div>
          <div class="mt-px flex h-3 items-center bg-[#232933]">
            <div class="flex w-7 items-center gap-1 text-white">
              <span class="ml-px h-2.5 w-0.5 bg-[#8b9098]"></span>
              <button aria-label="Close command line" class="size-2"><svg class="size-2"><use href="#x" /></svg></button>
              <button aria-label="Customize"><svg class="size-2" viewBox="0 0 10 10"><path d="M1 9l5-5" stroke="#fff" stroke-width="1.800" /><path d="M9 2a2 2 0 1 1-2-1" stroke="#fff" stroke-width="1.500" fill="none" /></svg></button>
            </div>
            <div class="flex h-full flex-1 items-center bg-white px-0.5 text-[#33373d]">
              <span class="size-2 border border-[#e2e2e2]"></span>
              <svg class="size-1.5 brightness-0"><use href="#caret" /></svg>
              <p class="pl-px whitespace-nowrap leading-[9px]"><b class="font-normal text-black">DIM</b> Specify dimension line location or second line for angle [<span class="bg-[#d4d6d8]"><i class="not-italic text-[#3b3bd0]">M</i>text</span> <span class="bg-[#d4d6d8]"><i class="not-italic text-[#3b3bd0]">T</i>ext</span> <span class="bg-[#d4d6d8]">text a<i class="not-italic text-[#3b3bd0]">N</i>gle</span> <span class="bg-[#d4d6d8]"><i class="not-italic text-[#3b3bd0]">U</i>ndo</span>]:</p>
              <svg class="ml-auto size-1.5 rotate-180 brightness-0"><use href="#caret" /></svg>
            </div>
          </div>
        </div>
      </main>

      <!-- Layout tabs and status bar -->
      <footer class="flex h-[16px] shrink-0 items-center border-t border-[#3d4450] bg-[#212937]">
        <button aria-label="Layout menu" class="w-[22px] pl-1 flex justify-center"><svg class="size-2.5"><use href="#bars" /></svg></button>
        <a href="#" class="w-[34px] h-3 leading-[12px] text-center bg-[#3d4753] font-bold text-white [clip-path:polygon(10%_0,90%_0,100%_100%,0_100%)]">Model</a>
        <a href="#" class="w-[28px] text-center">Layout1</a>
        <span class="text-[#4a525e]">/</span>
        <a href="#" class="w-[32px] text-center">Layout2</a>
        <span class="text-[#4a525e]">/</span>
        <button aria-label="New layout" class="w-[18px] flex justify-center"><svg class="size-2"><use href="#plus" /></svg></button>
        <span class="text-[#4a525e]">/</span>

        <div class="ml-auto flex h-3 items-center">
          <button class="h-full w-6 bg-[#2f3947] mr-0.5">MODEL</button>
          <button aria-label="Grid" class="bg-[#5c93c7] size-3 flex items-center justify-center"><svg class="size-2.5" viewBox="0 0 10 10"><path d="M2.500 1v8M5 1v8M7.500 1v8M1 3h8M1 5.500h8M1 8h8" stroke="#fff" stroke-width=".8" /></svg></button>
          <button aria-label="Snap" class="size-3 flex items-center justify-center"><svg class="size-2.5" viewBox="0 0 10 10"><path d="M1 2h9M1 5h9M1 8h9" stroke="#e0e3e8" stroke-dasharray="1 2.500" stroke-width="1.200" /></svg></button>
          <svg class="w-2 h-1.5"><use href="#caret" /></svg>
          <button aria-label="Ortho" class="ml-px bg-[#5c93c7] size-3 flex items-center justify-center"><svg class="size-2.5" viewBox="0 0 10 10"><path d="M2 1v7h7M2 5h3v3" stroke="#fff" fill="none" /></svg></button>
          <button aria-label="Polar" class="size-3 flex items-center justify-center"><svg class="size-2.5" viewBox="0 0 10 10"><path d="M8 5a3.500 3.500 0 1 1-2-3M5 5l4-3M5 5h5" stroke="#e0e3e8" fill="none" stroke-width=".9" /></svg></button>
          <svg class="w-2 h-1.5"><use href="#caret" /></svg>
          <button aria-label="Isodraft" class="size-3 flex items-center justify-center"><svg class="size-2.5" viewBox="0 0 10 10"><path d="M5 1v8M1 2l4 3 3 4" stroke="#8fa88f" fill="none" /></svg></button>
          <svg class="w-2 h-1.5"><use href="#caret" /></svg>
          <button aria-label="Tracking" class="ml-px bg-[#5c93c7] size-3 flex items-center justify-center"><svg class="size-2.5" viewBox="0 0 10 10"><path d="M1 8h8M1 8l7-6" stroke="#fff" /></svg></button>
          <button aria-label="Object snap" class="ml-px bg-[#5c93c7] size-3 flex items-center justify-center"><svg class="size-2.5" viewBox="0 0 10 10"><path d="M2 3h6v6H2z" stroke="#fff" fill="none" /><path d="M1 1h3v3H1z" fill="#fff" /></svg></button>
          <svg class="w-2 h-1.5"><use href="#caret" /></svg>
          <button aria-label="Annotation visibility" class="ml-px bg-[#5c93c7] size-3 flex items-center justify-center"><svg class="size-2.5"><use href="#manplus" /></svg></button>
          <button aria-label="Auto scale" class="size-3 flex items-center justify-center"><svg class="size-2.5"><use href="#manplus" /></svg></button>
          <button aria-label="Annotation scale" class="size-3 flex items-center justify-center"><svg class="size-2.5"><use href="#man" /></svg></button>
          <button class="flex w-[18px] items-center justify-center">1:1<svg class="size-1.5"><use href="#caret" /></svg></button>
          <button aria-label="Workspace" class="size-3 flex items-center justify-center"><svg class="size-2"><use href="#gear" /></svg></button>
          <svg class="w-2 h-1.5"><use href="#caret" /></svg>
          <button aria-label="Annotation monitor" class="h-3 w-[14px] flex items-center justify-center"><svg class="size-2.5"><use href="#plus" /></svg></button>
          <button aria-label="Isolate" class="h-3 w-[14px] flex items-center justify-center"><svg class="size-2.5" viewBox="0 0 10 10"><path d="M1 1h3v3H1zM6 2h3v3H6zM4 6l2 3H2z" stroke="#e0e3e8" fill="none" stroke-width=".9" /></svg></button>
          <button aria-label="Performance" class="h-3 w-[15px] flex items-center justify-center"><svg class="size-2.5" viewBox="0 0 10 10"><circle cx="4" cy="3" r="2.500" fill="#e6c15a" /><path d="M1 6h8v3H1z" fill="#5aa6d8" /><path d="M6 3h3v3H6z" fill="#7fd0a0" /></svg></button>
          <button aria-label="Clean screen" class="h-3 w-[15px] flex items-center justify-center"><svg class="size-2.5" viewBox="0 0 10 10"><path d="M1 2h8v6H1z" stroke="#e0e3e8" fill="none" /><path d="M5 3h3v2H5zM2 6h2v1H2z" fill="#e0e3e8" /></svg></button>
          <button aria-label="Customization" class="mr-0.5 h-3 w-3 flex items-center justify-center"><svg class="size-2.5"><use href="#bars" /></svg></button>
        </div>
      </footer>
    </div>

    <!-- Edge of the 3ds Max window behind -->
    <aside class="flex w-[18px] shrink-0 flex-col bg-[#434343] text-[#bcbcbc]">
      <div class="flex h-3 items-center justify-center bg-[#232323] text-[#8a8a8a]"><svg class="size-2"><use href="#x" /></svg></div>
      <div class="flex h-2.5 items-center justify-between bg-[#6c6c6c] pl-px">er<svg class="size-1.5"><use href="#caret" /></svg></div>
      <div class="mt-[34px] h-2.5 bg-[#525252]"></div>
      <div class="mt-0.5 h-2 bg-[#383838]"></div>
      <div class="mt-1 border-t border-dotted border-[#a0a0a0]"></div>
      <div class="mt-[19px] flex justify-end gap-0.5 pr-0.5"><span class="h-2 w-1 bg-[#6a6a6a]"></span><span class="size-[9px] bg-[#d64c60]"></span></div>
      <div class="mt-1 flex h-2.5 items-center justify-end bg-[#5a5a5a]"><svg class="size-1.5"><use href="#caret" /></svg></div>
      <div class="mt-0.5 mr-px h-16 border border-l-0 border-[#c8c8c8]"><div class="h-2 bg-[#5f8fc8]"></div></div>
      <div class="mt-5 border-t border-[#555]"></div>
      <div class="mt-[3px] flex h-[104px] w-3 justify-center rounded-sm bg-[#606060] text-[#aaa]">◦</div>
    </aside>
  </div>

  <!-- Time slider -->
  <section class="flex h-[22px] shrink-0 pr-[25px]">
    <div class="flex w-[47px] shrink-0">
      <div class="ml-[18px] border-l border-dotted border-[#8a8a8a]"></div>
      <svg class="ml-2 mt-1 size-2.5" viewBox="0 0 10 10"><path d="M1 1v8" stroke="#ccc" stroke-dasharray="2 1" /><path d="M3 7c1-6 2-6 3-2s2 3 3 1" stroke="#3fc0a0" fill="none" /></svg>
    </div>
    <div class="relative flex-1 overflow-hidden bg-[#2a2a2a]">
      <div class="absolute left-0.5 top-[3px] h-3 w-1 bg-[#9aa028]"></div>
      <div id="timeline" class="relative -mx-2 flex"></div>
    </div>
  </section>

  <!-- 3ds Max status bar -->
  <section class="flex h-[29px] shrink-0 bg-[#444444] pt-1">
    <div class="ml-0.5 w-[50px] shrink-0 -mt-0.5">
      <div class="h-[11px] bg-[#dcc3c9]"></div>
      <div class="mt-px h-3 overflow-hidden whitespace-nowrap bg-[#f5f5f5] px-0.5 font-['Liberation_Mono',monospace] leading-[10px] text-[#7a7a7a]">Scripting Mi</div>
    </div>
    <div class="ml-1 leading-[12px] text-[#e0e0e0] -mt-px">
      <p>1 Object Selected</p>
      <p>Click and drag to select and scale objects (uniformly)</p>
    </div>

    <div class="ml-auto w-[205px]">
      <div class="flex h-3 items-center gap-[3px] -mt-px whitespace-nowrap">
        <svg class="size-2.5" viewBox="0 0 10 10"><path d="M1 3V1h2M7 1h2v2M1 7v2h2" stroke="#ccc" fill="none" /><circle cx="5" cy="5" r="1.500" fill="#4fc0a0" /><path d="M7 9h3V6z" fill="#fff" /></svg>
        <svg class="size-2.5 p-px" viewBox="0 0 10 10"><path d="M1 4h8v6H1z" fill="#ddd" /><path d="M3 4V1h4v3" stroke="#ddd" fill="none" /></svg>
        <svg class="size-2.5 p-px" viewBox="0 0 10 10"><path d="M1 1h8v8H1z" stroke="#ccc" fill="none" /><path d="M5 2v6M2 5h6" stroke="#ccc" /></svg>
        <label for="cx">X:</label><input id="cx" type="text" value="100,0" class="h-2 w-[32px] bg-[#686868] pl-px" />
        <label for="cy">Y:</label><input id="cy" type="text" value="100,0" class="h-2 w-[27px] bg-[#545454] pl-px text-[#8a8a8a]" />
        <label for="cz" class="ml-1">Z:</label><input id="cz" type="text" value="100,0" class="h-2 w-[27px] bg-[#545454] pl-px text-[#8a8a8a]" />
        <span class="pl-0.5">Grid = 10,0cm</span>
      </div>
      <div class="flex h-3 items-center gap-0.5 pl-[88px] whitespace-nowrap">
        <svg class="size-2" viewBox="0 0 10 10"><path d="M0 0h10v10H0z" fill="#666" /><path d="M2 2l2 4 4 2M6 2l2 2" stroke="#fff" stroke-width="1.500" fill="none" /></svg>
        <span>Enabled:</span><span class="mx-px size-[5px] rounded-full bg-[#58d858]"></span><span class="size-2 rounded-full border-2 border-white bg-[#999]"></span>
        <span class="mx-1 h-2 w-px bg-[#333]"></span>
        <svg class="size-2" viewBox="0 0 10 10"><path d="M1 3l4-2 4 2v4L5 9 1 7zM1 3l4 2 4-2M5 5v4" stroke="#aaa" fill="none" /></svg>
        <span class="text-[#c8c8c8]">Add Time Tag</span>
      </div>
    </div>

    <div class="ml-3 w-[60px]">
      <div class="flex h-3 items-center justify-between -mt-px">
        <svg class="size-2.5"><use href="#end" /></svg><svg class="size-2.5"><use href="#step" /></svg><svg class="size-2.5" viewBox="0 0 10 10"><path d="M2 1l6 4-6 4z" fill="#eee" /></svg><svg class="size-2.5 -scale-x-100"><use href="#step" /></svg><svg class="size-2.5 -scale-x-100"><use href="#end" /></svg>
      </div>
      <div class="flex h-3 items-center justify-between">
        <svg class="size-2" viewBox="0 0 10 10"><path d="M0 5l4-3v6zM10 5L6 2v6z" fill="#eee" /></svg>
        <input aria-label="Frame" type="text" value="0" class="h-2 w-[34px] bg-[#656565] pl-px" />
        <svg class="size-2" viewBox="0 0 10 10"><circle cx="4" cy="4" r="3" stroke="#ddd" fill="none" /><circle cx="7" cy="7" r="2.500" fill="#e0c048" /></svg>
      </div>
    </div>

    <button aria-label="Set keys" class="ml-1.5 flex h-5 w-[21px] items-center justify-center bg-[#666]"><svg class="size-4" viewBox="0 0 16 16"><path d="M7 1v12M1 7h12" stroke="#eee" stroke-width="2" /><path d="M9 14l4-4" stroke="#3fc08f" stroke-width="2" /><circle cx="13" cy="10" r="2" fill="#3fc08f" /></svg></button>
    <div class="ml-0.5 flex w-[24px] flex-col gap-0.5 whitespace-nowrap">
      <button class="h-[9px] bg-[#606060]">Auto Key</button>
      <button class="h-[9px] bg-[#606060]">Set Key</button>
    </div>
    <div class="ml-0.5 flex w-[57px] flex-col gap-0.5">
      <div class="flex h-[9px] items-center bg-[#6a6a6a] pl-0.5 pr-px"><select aria-label="Key set" class="h-2 flex-1 appearance-none"><option>Selected</option></select><svg class="size-1.5"><use href="#caret" /></svg></div>
      <div class="flex h-[9px] items-center gap-0.5"><svg class="size-2.5" viewBox="0 0 10 10"><path d="M1 8c2 0 1-6 3-6s1 6 4 6" stroke="#4fc0a0" fill="none" /><path d="M7 9h3V6z" fill="#fff" /></svg><button class="h-full flex-1 bg-[#606060]">Key Filters...</button></div>
    </div>
    <div class="ml-1 mr-1 grid h-6 w-[48px] grid-cols-4 place-items-center text-[#ddd] -mt-px">
      <svg class="size-2.5 -scale-x-100"><use href="#mag" /></svg>
      <svg class="size-2.5" viewBox="0 0 10 10"><path d="M4 1h5v5H4z" fill="#4fb88f" /><path d="M1 9l3-3" stroke="#ddd" /></svg>
      <svg class="size-2.5" viewBox="0 0 10 10"><path d="M1 3V1h2M7 1h2v2M1 7v2h2" stroke="#ddd" fill="none" /><circle cx="5" cy="5" r="2.300" fill="#4fb88f" /><path d="M7 9h3V6z" fill="#fff" /></svg>
      <svg class="size-2.5" viewBox="0 0 10 10"><path d="M1 5l7-4v6z" fill="#4fb88f" /><path d="M7 9h3V6z" fill="#fff" /></svg>
      <svg class="size-2.5" viewBox="0 0 10 10"><path d="M2 1l5 4-5 4z" stroke="#ddd" fill="none" /><path d="M7 9h3V6z" fill="#fff" /></svg>
      <svg class="size-2.5" viewBox="0 0 10 10"><path d="M3 9L1 5l2 0V2h1v2-3h1v3-2h1v3h1v3L6 9z" fill="#e0e0e0" /><path d="M7 9h3V6z" fill="#fff" /></svg>
      <svg class="size-2.5" viewBox="0 0 10 10"><circle cx="5" cy="4" r="3" fill="#4fb88f" /><path d="M2 8l3-4" stroke="#ddd" /><path d="M7 9h3V6z" fill="#fff" /></svg>
      <svg class="size-2.5" viewBox="0 0 10 10"><path d="M1 1h8v8H1z" stroke="#eee" fill="none" /><path d="M1 5h4v4H1zM5 1h4v4H5z" fill="#eee" /></svg>
    </div>
  </section>

  <!-- Taskbar -->
  <footer class="flex h-[23px] shrink-0 items-center bg-[#1f1f1f] pl-[9px] pr-2">
    <button aria-label="Start"><svg class="size-[13px]" viewBox="0 0 13 13"><path d="M0 0h6v6H0zM7 0h6v6H7zM0 7h6v6H0zM7 7h6v6H7z" fill="#5fc4f2" /></svg></button>
    <label class="ml-1.5 flex h-4 w-[110px] items-center rounded-full bg-[#3a3a3a] pl-1.5 text-[#ddd]">
      <svg class="size-2.5"><use href="#mag" /></svg>
      <input type="text" placeholder="Ara" class="w-[60px] ml-1 text-[7px] placeholder:text-[#ddd]" />
      <svg class="ml-1 h-3 w-5" viewBox="0 0 20 12"><path d="M1 3c4-3 6 0 9 0s4-2 7 1c-4 3-6 1-9 1s-6 0-7-2zM3 8c3-2 6-1 8-1s6 0 8 2c-4 3-14 2-16-1z" fill="#2fb39a" /><path d="M0 10h20" stroke="#1d6f78" stroke-width="1.500" /></svg>
    </label>
    <div class="ml-[3px] flex h-full items-center">
      <button aria-label="Task view" class="flex w-[22px] justify-center"><svg class="size-3" viewBox="0 0 12 12"><path d="M1 4h7v7H1z" fill="#8a8a8a" /><path d="M4 1h7v7H4z" fill="#eee" /></svg></button>
      <button aria-label="Mail" class="flex w-[22px] justify-center"><svg class="size-3" viewBox="0 0 12 12"><path d="M1 5l5-4 5 4v6H1z" fill="#2f8ee0" /><path d="M2 4l9 1-5 4z" fill="#fff" /></svg></button>
      <button aria-label="Chrome" class="flex w-[22px] justify-center"><svg class="size-3" viewBox="0 0 12 12"><circle cx="6" cy="6" r="5.500" fill="#e8b92f" /><path d="M1 3a5.500 5.500 0 0 1 10 1H6z" fill="#dd4b3e" /><path d="M1 3l4 5-1 3A5.500 5.500 0 0 1 1 3z" fill="#3aa757" /><circle cx="6" cy="6" r="2.500" fill="#4a8af4" stroke="#fff" stroke-width=".8" /></svg></button>
      <button aria-label="Opera" class="flex h-full w-[22px] flex-col items-center justify-end gap-px pb-px"><svg class="size-3 mb-0.5" viewBox="0 0 12 12"><ellipse cx="6" cy="6" rx="4" ry="4.500" stroke="#e8203a" stroke-width="2.600" fill="none" /></svg><span class="h-0.5 w-3 rounded bg-[#e59aa8]"></span></button>
      <button aria-label="Edge" class="flex h-full w-[22px] flex-col items-center justify-end gap-px pb-px"><svg class="size-3 mb-0.5" viewBox="0 0 12 12"><circle cx="6" cy="6" r="5.500" fill="#2f9fd8" /><path d="M1 5c2-6 10-5 10 1-1 2-4 2-5 1 1-3-3-3-5-2z" fill="#54d0a0" /><path d="M5 6c0 3 2 4 5 3-2 3-7 2-5-3z" fill="#0f4f90" /></svg><span class="h-0.5 w-1 rounded bg-[#aaa]"></span></button>
      <button aria-label="Explorer" class="flex h-full w-[22px] flex-col items-center justify-end gap-px pb-px"><svg class="size-3 mb-0.5" viewBox="0 0 12 12"><path d="M0 1h5l1 2h6v8H0z" fill="#f2c548" /><path d="M2 8h8v3H2z" fill="#3f8fd8" /></svg><span class="h-0.5 w-1 rounded bg-[#aaa]"></span></button>
      <button aria-label="Spotify" class="flex h-full w-[22px] flex-col items-center justify-end gap-px pb-px"><svg class="size-3 mb-0.5" viewBox="0 0 12 12"><circle cx="6" cy="6" r="5.500" fill="#27d05c" /><path d="M3 4c2-1 4-1 6 .5M3 6c2-.7 4-.5 5.500.5M3.500 8c1.500-.5 3-.3 4.500.5" stroke="#0d2b16" fill="none" /></svg><span class="h-0.5 w-1 rounded bg-[#aaa]"></span></button>
      <button aria-label="3ds Max" class="flex h-full w-[22px] flex-col items-center justify-end gap-px pb-px"><span class="mb-0.5 h-3 w-[11px] bg-[#3fa3b8] text-[8px] font-bold leading-[9px] text-white">3</span><span class="h-0.5 w-1 rounded bg-[#aaa]"></span></button>
      <button aria-label="OBS" class="flex h-full w-[22px] flex-col items-center justify-end gap-px pb-px"><svg class="size-3 mb-0.5" viewBox="0 0 12 12"><circle cx="6" cy="6" r="5.300" stroke="#c8c8c8" fill="#222" /><path d="M6 6c-2 0-3-2-2-4M6 6c1-2 3-2 5 0M6 6c1 2 0 4-2 4" stroke="#c8c8c8" fill="none" /></svg><span class="h-0.5 w-1 rounded bg-[#aaa]"></span></button>
      <button aria-label="Steam" class="flex h-full w-[22px] flex-col items-center justify-end gap-px pb-px"><svg class="size-3 mb-0.5" viewBox="0 0 12 12"><circle cx="6" cy="6" r="5.500" fill="#123a6b" /><circle cx="8" cy="4.500" r="2.500" fill="#fff" /><path d="M0 7l5 2 3-3" stroke="#fff" stroke-width="2" fill="none" /></svg><span class="h-0.5 w-1 rounded bg-[#aaa]"></span></button>
      <button aria-label="AutoCAD" class="flex h-[21px] w-[20px] flex-col items-center justify-end gap-px rounded-sm bg-[#303030]"><span class="mb-0.5 h-3 w-[11px] border-l border-[#f07aa0] bg-[#d5084f] text-[8px] font-bold leading-[9px] text-white">A</span><span class="h-0.5 w-2 rounded bg-[#bbb]"></span></button>
    </div>

    <div class="ml-auto flex items-center">
      <button class="flex w-[77px] items-center gap-[3px] text-left">
        <svg class="h-3.5 w-3" viewBox="0 0 12 14"><circle cx="5" cy="6" r="4" fill="#f2a53c" /><path d="M1 12c0-4 4-4 5-2 3-2 6 0 5 3H2z" fill="#dce8f6" /><circle cx="8" cy="4" r="3.500" fill="#e2566c" /><text x="8" y="6" font-size="5" fill="#fff" text-anchor="middle">2</text></svg>
        <span><b class="font-medium">16°C</b><br />Kısmen güneşli</span>
      </button>
      <button aria-label="Hidden icons" class="w-4 flex justify-center"><svg class="size-2" viewBox="0 0 10 10"><path d="M2 7l3-3 3 3" stroke="#eee" fill="none" stroke-width="1.300" /></svg></button>
      <button aria-label="Tray app" class="w-4 flex justify-center"><svg class="size-2" viewBox="0 0 10 10"><path d="M8 3a3 3 0 1 0 0 4" stroke="#ddd" fill="none" stroke-width="1.600" /><circle cx="6" cy="5" r="1.500" fill="#ddd" /></svg></button>
      <button aria-label="Security" class="w-4 flex justify-center"><svg class="size-2"><use href="#gear" /></svg></button>
      <button aria-label="Steam tray" class="w-4 flex justify-center"><svg class="size-2.5" viewBox="0 0 12 12"><circle cx="6" cy="6" r="5.500" fill="#123a6b" /><circle cx="8" cy="4.500" r="2.500" fill="#fff" /><path d="M0 8l4 1 3-3" stroke="#9fd0f0" stroke-width="2" fill="none" /></svg></button>
      <button aria-label="Microphone" class="w-4 flex justify-center"><svg class="size-2.5" viewBox="0 0 10 10"><path d="M4 1h2v5H4z" fill="#b58be0" /><path d="M2 4c0 5 6 5 6 0M5 8v2" stroke="#b58be0" fill="none" /></svg></button>
      <button aria-label="Network" class="w-3.5 flex justify-center"><svg class="size-2.5" viewBox="0 0 10 10"><path d="M1 1h7v6H1zM3 9h4" stroke="#eee" fill="none" /><path d="M7 0h3v3H7z" fill="#eee" /></svg></button>
      <button aria-label="Volume" class="w-3 flex justify-center"><svg class="size-2.5" viewBox="0 0 10 10"><path d="M0 4h2l3-3v8L2 6H0z" fill="#eee" /><path d="M6 3c1 1 1 3 0 4M8 2c2 2 2 4 0 6" stroke="#eee" fill="none" stroke-width=".8" /></svg></button>
      <time class="w-9 text-right text-white">13:33<br />27.03.2026</time>
    </div>
  </footer>

  <script>
    // Frame labels and ticks, 0 to 100
    const timeline = document.getElementById('timeline');
    for (let frame = 0; frame <= 100; frame += 2) {
      const cell = document.createElement('div');
      cell.className = 'flex flex-1 basis-0 flex-col items-center text-[#c0c0c0]';
      cell.innerHTML = `<div class="flex h-[7px] w-full items-end justify-between"><span class="w-px"></span><span class="h-[5px] w-px bg-[#6c6c6c]"></span><span class="h-[5px] w-px bg-[#6c6c6c]"></span></div><span>${frame}</span>`;
      timeline.appendChild(cell);
    }
  </script>
</body>

</html>
